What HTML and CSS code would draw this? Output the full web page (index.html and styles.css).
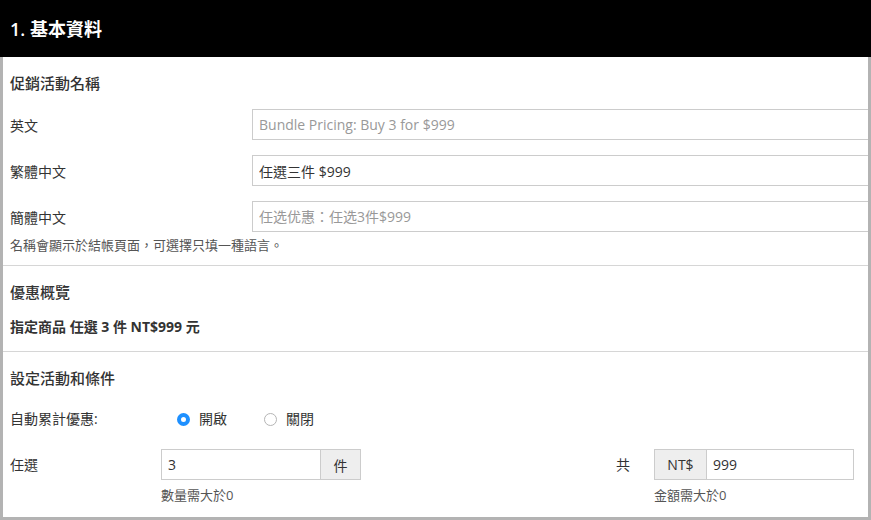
FILE: index.html
```html
<!DOCTYPE html>
<html lang="zh-Hant">
<head>
    <meta charset="UTF-8">
    <title>基本資料</title>
    <link rel="stylesheet" href="styles.css">
</head>
<body>
    <div class="page-header">
        <h1>1. 基本資料</h1>
    </div>

    <div class="panel">
        <!-- 促銷活動名稱 -->
        <div class="section">
            <h2 class="section-title">促銷活動名稱</h2>
            <div class="name-row">
                <label class="name-label">英文</label>
                <input class="text-input" type="text" placeholder="Bundle Pricing: Buy 3 for $999">
            </div>
            <div class="name-row">
                <label class="name-label">繁體中文</label>
                <input class="text-input" type="text" value="任選三件 $999">
            </div>
            <div class="name-row">
                <label class="name-label">簡體中文</label>
                <input class="text-input" type="text" placeholder="任选优惠：任选3件$999">
            </div>
            <p class="help-text">名稱會顯示於結帳頁面，可選擇只填一種語言。</p>
        </div>

        <!-- 優惠概覽 -->
        <div class="section section-summary">
            <h2 class="section-title">優惠概覽</h2>
            <p class="summary">指定商品 任選 3 件 NT$999 元</p>
        </div>

        <!-- 設定活動和條件 -->
        <div class="section section-rules">
            <h2 class="section-title">設定活動和條件</h2>
            <div class="radio-row">
                <span class="radio-label">自動累計優惠:</span>
                <label class="radio-option">
                    <span class="radio checked"></span>開啟
                </label>
                <label class="radio-option">
                    <span class="radio"></span>關閉
                </label>
            </div>
            <div class="condition-row">
                <div class="condition">
                    <span class="condition-label">任選</span>
                    <div class="field">
                        <div class="input-group">
                            <input class="group-input" type="text" value="3">
                            <span class="addon addon-right">件</span>
                        </div>
                        <p class="field-hint">數量需大於0</p>
                    </div>
                </div>
                <div class="condition condition-total">
                    <span class="condition-label short">共</span>
                    <div class="field">
                        <div class="input-group">
                            <span class="addon addon-left">NT$</span>
                            <input class="group-input" type="text" value="999">
                        </div>
                        <p class="field-hint">金額需大於0</p>
                    </div>
                </div>
            </div>
        </div>
    </div>
</body>
</html>
```

FILE: styles.css
```css
body {
    margin: 0;
    padding: 0;
    font-family: "Open Sans", "Noto Sans CJK TC", sans-serif;
    font-size: 14px;
    color: #333;
    background-color: #fff;
}

.page-header {
    background-color: #000;
    height: 57px;
    display: flex;
    align-items: center;
    padding-left: 10px;
}

.page-header h1 {
    margin: 0;
    font-size: 18px;
    font-weight: 600;
    color: #fff;
    line-height: 24px;
}

.panel {
    border: 3px solid #b3b3b3;
    border-top: none;
    overflow: hidden;
}

.section {
    padding: 16px 0 11px 7px;
    border-bottom: 1px solid #d6d6d6;
}

.section-title {
    margin: 0;
    font-size: 15px;
    font-weight: 500;
    line-height: 20px;
}

.name-row {
    display: flex;
    align-items: center;
    margin-top: 15px;
}

.section .name-row:first-of-type {
    margin-top: 16px;
}

.name-label {
    width: 242px;
    flex-shrink: 0;
}

.text-input {
    flex: 1;
    height: 31px;
    box-sizing: border-box;
    margin-right: -10px;
    border: 1px solid #ccc;
    padding: 0 6px;
    font-family: inherit;
    font-size: 14px;
    color: #333;
    outline: none;
}

.text-input::placeholder {
    color: #999;
}

.help-text {
    margin: 4px 0 0;
    font-size: 13px;
    line-height: 18px;
    color: #555;
}

.section-summary {
    padding-bottom: 14px;
}

.summary {
    margin: 15px 0 0;
    font-weight: 700;
    line-height: 20px;
}

.section-rules {
    border-bottom: none;
    padding-right: 14px;
    padding-bottom: 13px;
}

.radio-row {
    display: flex;
    align-items: center;
    margin-top: 21px;
    line-height: 20px;
}

.radio-label {
    width: 167px;
}

.radio-option {
    display: flex;
    align-items: center;
    margin-right: 37px;
}

.radio {
    width: 13px;
    height: 13px;
    box-sizing: border-box;
    border: 1px solid #b5b5b5;
    border-radius: 50%;
    margin-right: 9px;
}

.radio.checked {
    border: 4.5px solid #1e90ff;
    background-color: #fff;
}

.condition-row {
    display: flex;
    justify-content: space-between;
    margin-top: 20px;
}

.condition {
    display: flex;
}

.condition-label {
    width: 151px;
    line-height: 31px;
}

.condition-label.short {
    width: 38px;
}

.input-group {
    display: flex;
    width: 200px;
    height: 31px;
    box-sizing: border-box;
    border: 1px solid #ccc;
}

.group-input {
    flex: 1;
    min-width: 0;
    border: none;
    padding: 0 6px;
    font-family: inherit;
    font-size: 14px;
    color: #333;
    outline: none;
}

.addon {
    display: flex;
    align-items: center;
    justify-content: center;
    background-color: #eee;
    color: #333;
}

.addon-right {
    width: 39px;
    border-left: 1px solid #ccc;
}

.addon-left {
    width: 51px;
    border-right: 1px solid #ccc;
}

.field-hint {
    margin: 6px 0 0;
    font-size: 13px;
    line-height: 18px;
    color: #555;
}
```
